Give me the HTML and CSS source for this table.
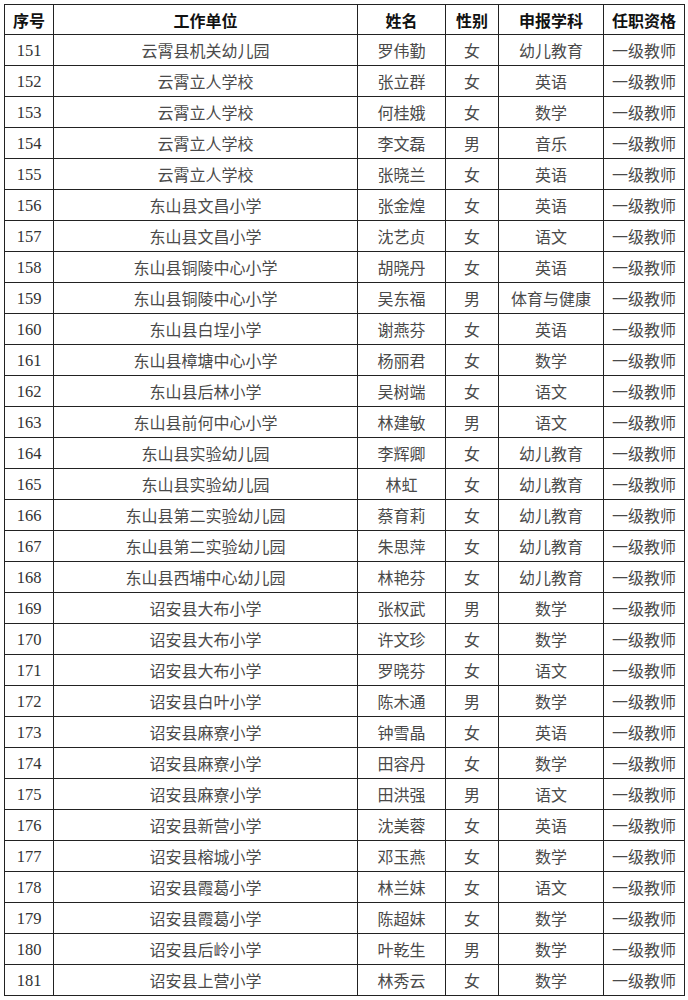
FILE: index.html
```html
<!DOCTYPE html>
<html lang="zh-CN">
<head>
<meta charset="utf-8">
<title>名单</title>
<link rel="stylesheet" href="styles.css">
</head>
<body>
<table class="list">
<colgroup>
<col class="c-no"><col class="c-unit"><col class="c-name"><col class="c-sex"><col class="c-subj"><col class="c-qual">
</colgroup>
<thead>
<tr><th>序号</th><th>工作单位</th><th>姓名</th><th>性别</th><th>申报学科</th><th>任职资格</th></tr>
</thead>
<tbody>
<tr><td class="num">151</td><td>云霄县机关幼儿园</td><td>罗伟勤</td><td>女</td><td>幼儿教育</td><td>一级教师</td></tr>
<tr><td class="num">152</td><td>云霄立人学校</td><td>张立群</td><td>女</td><td>英语</td><td>一级教师</td></tr>
<tr><td class="num">153</td><td>云霄立人学校</td><td>何桂娥</td><td>女</td><td>数学</td><td>一级教师</td></tr>
<tr><td class="num">154</td><td>云霄立人学校</td><td>李文磊</td><td>男</td><td>音乐</td><td>一级教师</td></tr>
<tr><td class="num">155</td><td>云霄立人学校</td><td>张晓兰</td><td>女</td><td>英语</td><td>一级教师</td></tr>
<tr><td class="num">156</td><td>东山县文昌小学</td><td>张金煌</td><td>女</td><td>英语</td><td>一级教师</td></tr>
<tr><td class="num">157</td><td>东山县文昌小学</td><td>沈艺贞</td><td>女</td><td>语文</td><td>一级教师</td></tr>
<tr><td class="num">158</td><td>东山县铜陵中心小学</td><td>胡晓丹</td><td>女</td><td>英语</td><td>一级教师</td></tr>
<tr><td class="num">159</td><td>东山县铜陵中心小学</td><td>吴东福</td><td>男</td><td>体育与健康</td><td>一级教师</td></tr>
<tr><td class="num">160</td><td>东山县白埕小学</td><td>谢燕芬</td><td>女</td><td>英语</td><td>一级教师</td></tr>
<tr><td class="num">161</td><td>东山县樟塘中心小学</td><td>杨丽君</td><td>女</td><td>数学</td><td>一级教师</td></tr>
<tr><td class="num">162</td><td>东山县后林小学</td><td>吴树端</td><td>女</td><td>语文</td><td>一级教师</td></tr>
<tr><td class="num">163</td><td>东山县前何中心小学</td><td>林建敏</td><td>男</td><td>语文</td><td>一级教师</td></tr>
<tr><td class="num">164</td><td>东山县实验幼儿园</td><td>李辉卿</td><td>女</td><td>幼儿教育</td><td>一级教师</td></tr>
<tr><td class="num">165</td><td>东山县实验幼儿园</td><td>林虹</td><td>女</td><td>幼儿教育</td><td>一级教师</td></tr>
<tr><td class="num">166</td><td>东山县第二实验幼儿园</td><td>蔡育莉</td><td>女</td><td>幼儿教育</td><td>一级教师</td></tr>
<tr><td class="num">167</td><td>东山县第二实验幼儿园</td><td>朱思萍</td><td>女</td><td>幼儿教育</td><td>一级教师</td></tr>
<tr><td class="num">168</td><td>东山县西埔中心幼儿园</td><td>林艳芬</td><td>女</td><td>幼儿教育</td><td>一级教师</td></tr>
<tr><td class="num">169</td><td>诏安县大布小学</td><td>张权武</td><td>男</td><td>数学</td><td>一级教师</td></tr>
<tr><td class="num">170</td><td>诏安县大布小学</td><td>许文珍</td><td>女</td><td>数学</td><td>一级教师</td></tr>
<tr><td class="num">171</td><td>诏安县大布小学</td><td>罗晓芬</td><td>女</td><td>语文</td><td>一级教师</td></tr>
<tr><td class="num">172</td><td>诏安县白叶小学</td><td>陈木通</td><td>男</td><td>数学</td><td>一级教师</td></tr>
<tr><td class="num">173</td><td>诏安县麻寮小学</td><td>钟雪晶</td><td>女</td><td>英语</td><td>一级教师</td></tr>
<tr><td class="num">174</td><td>诏安县麻寮小学</td><td>田容丹</td><td>女</td><td>数学</td><td>一级教师</td></tr>
<tr><td class="num">175</td><td>诏安县麻寮小学</td><td>田洪强</td><td>男</td><td>语文</td><td>一级教师</td></tr>
<tr><td class="num">176</td><td>诏安县新营小学</td><td>沈美蓉</td><td>女</td><td>英语</td><td>一级教师</td></tr>
<tr><td class="num">177</td><td>诏安县榕城小学</td><td>邓玉燕</td><td>女</td><td>数学</td><td>一级教师</td></tr>
<tr><td class="num">178</td><td>诏安县霞葛小学</td><td>林兰妹</td><td>女</td><td>语文</td><td>一级教师</td></tr>
<tr><td class="num">179</td><td>诏安县霞葛小学</td><td>陈超妹</td><td>女</td><td>数学</td><td>一级教师</td></tr>
<tr><td class="num">180</td><td>诏安县后岭小学</td><td>叶乾生</td><td>男</td><td>数学</td><td>一级教师</td></tr>
<tr><td class="num">181</td><td>诏安县上营小学</td><td>林秀云</td><td>女</td><td>数学</td><td>一级教师</td></tr>
</tbody>
</table>
</body>
</html>
```
FILE: styles.css
```css
html, body {
  margin: 0;
  padding: 0;
  background: #fff;
}
body {
  padding: 4px 0 0 4px;
}
.list {
  border-collapse: collapse;
  table-layout: fixed;
  width: 680px;
  font-family: "Noto Sans CJK SC", sans-serif;
  font-size: 16px;
}
.c-no { width: 49px; }
.c-unit { width: 304px; }
.c-name { width: 88px; }
.c-sex { width: 53px; }
.c-subj { width: 105px; }
.c-qual { width: 81px; }
.list th, .list td {
  border: 1.5px solid #222;
  padding: 0;
  text-align: center;
  vertical-align: middle;
  white-space: nowrap;
  overflow: hidden;
  line-height: 20px;
}
.list th {
  height: 29px;
  font-weight: 700;
  color: #111;
}
.list td {
  height: 30px;
  font-weight: 400;
  color: #4a4a4a;
}
.list td.num {
  height: 28px;
  padding-top: 2px;
  font-family: "Liberation Serif", serif;
  font-size: 16.5px;
  color: #333;
}
```
